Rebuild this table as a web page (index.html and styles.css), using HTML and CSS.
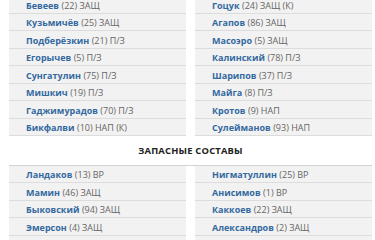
FILE: index.html
```html
<!DOCTYPE html>
<html lang="ru">
<head>
<meta charset="utf-8">
<link rel="stylesheet" href="styles.css">
</head>
<body>
<div class="page">
  <div class="lineup first">
    <ul class="col">
      <li><b>Бевеев</b> (22) ЗАЩ</li>
      <li><b>Кузьмичёв</b> (25) ЗАЩ</li>
      <li><b>Подберёзкин</b> (21) П/З</li>
      <li><b>Егорычев</b> (5) П/З</li>
      <li><b>Сунгатулин</b> (75) П/З</li>
      <li><b>Мишкич</b> (19) П/З</li>
      <li><b>Гаджимурадов</b> (70) П/З</li>
      <li><b>Бикфалви</b> (10) НАП (К)</li>
    </ul>
    <ul class="col">
      <li><b>Гоцук</b> (24) ЗАЩ (К)</li>
      <li><b>Агапов</b> (86) ЗАЩ</li>
      <li><b>Масоэро</b> (5) ЗАЩ</li>
      <li><b>Калинский</b> (78) П/З</li>
      <li><b>Шарипов</b> (37) П/З</li>
      <li><b>Майга</b> (8) П/З</li>
      <li><b>Кротов</b> (9) НАП</li>
      <li><b>Сулейманов</b> (93) НАП</li>
    </ul>
  </div>
  <h2 class="title">ЗАПАСНЫЕ СОСТАВЫ</h2>
  <div class="lineup subs">
    <ul class="col more">
      <li><b>Ландаков</b> (13) ВР</li>
      <li><b>Мамин</b> (46) ЗАЩ</li>
      <li><b>Быковский</b> (94) ЗАЩ</li>
      <li><b>Эмерсон</b> (4) ЗАЩ</li>
    </ul>
    <ul class="col more">
      <li><b>Нигматуллин</b> (25) ВР</li>
      <li><b>Анисимов</b> (1) ВР</li>
      <li><b>Каккоев</b> (22) ЗАЩ</li>
      <li><b>Александров</b> (2) ЗАЩ</li>
    </ul>
  </div>
</div>
</body>
</html>
```
FILE: styles.css
```css
html, body {
  margin: 0;
  padding: 0;
  background: #ffffff;
}
body {
  font-family: "Open Sans", "DejaVu Sans", sans-serif;
  font-size: 9px;
  color: #666666;
  overflow: hidden;
}
.page {
  padding: 0 3px 0 9px;
}
.lineup {
  display: grid;
  grid-template-columns: 1fr 1fr;
  column-gap: 9px;
}
.first {
  margin-top: -4px;
}
.subs {
  border-top: 1.5px solid #d3d3d3;
}
.col {
  list-style: none;
  margin: 0;
  padding: 0;
}
.col.more {
  background: #f2f2f2;
  padding-bottom: 10px;
}
.col li {
  box-sizing: border-box;
  height: 17.5px;
  display: flex;
  align-items: center;
  padding: 2px 0 0 17px;
  background: #f2f2f2;
  border-bottom: 1px solid #dcdcdc;
  white-space: nowrap;
}
.col li b {
  color: #3469a0;
  font-weight: 700;
  margin-right: 2.5px;
}
.title {
  margin: 0;
  height: 28.5px;
  display: flex;
  align-items: center;
  justify-content: center;
  padding-top: 1px;
  box-sizing: border-box;
  font-size: 9.4px;
  font-weight: 700;
  color: #222222;
  letter-spacing: 0.2px;
}
```
